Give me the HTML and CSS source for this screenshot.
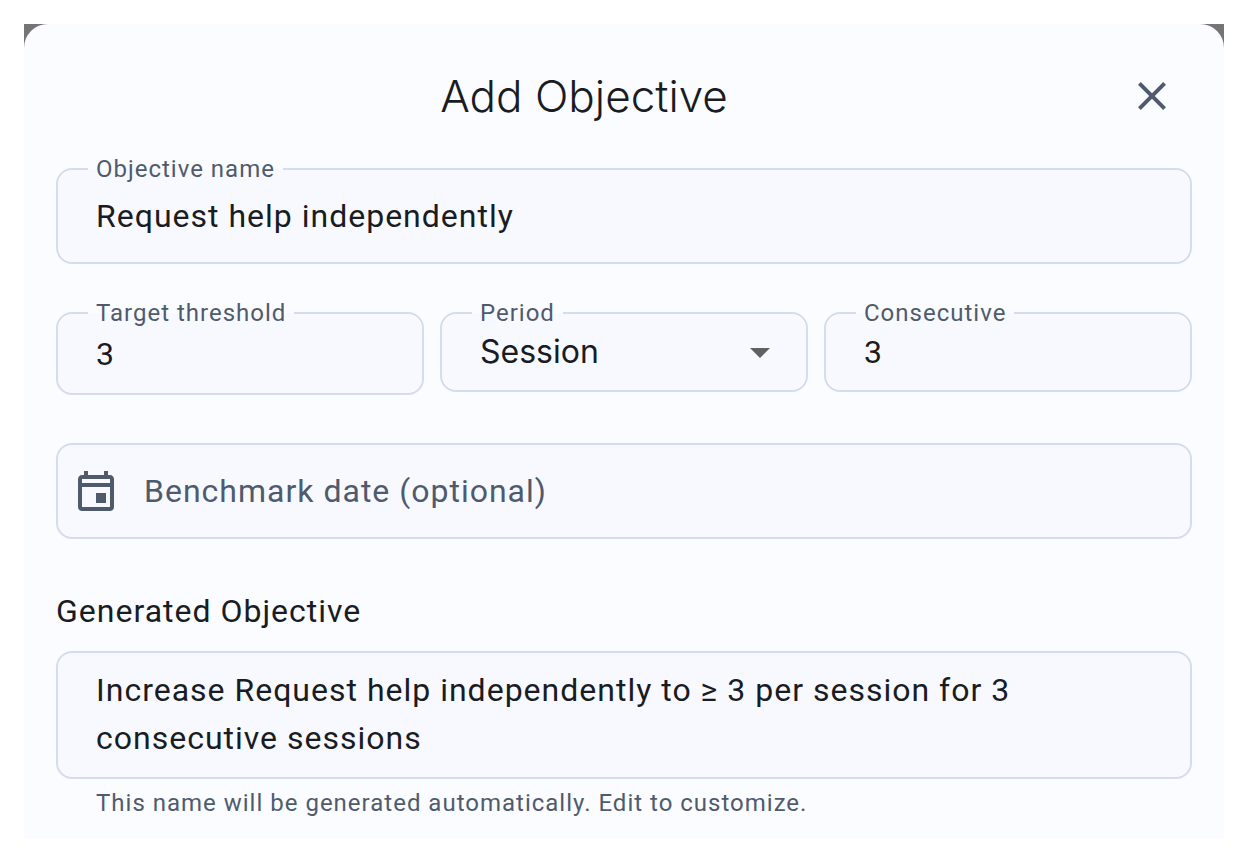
FILE: index.html
```html
<!DOCTYPE html>
<html lang="en">
<head>
<meta charset="utf-8">
<meta name="viewport" content="width=device-width, initial-scale=1">
<title>Add Objective</title>
<link rel="stylesheet" href="styles.css">
</head>
<body>
<main class="backdrop">
  <form class="sheet">
    <header class="sheet-header">
      <h1 class="title">Add Objective</h1>
      <button class="close" type="button" aria-label="Close">
        <svg class="icon" viewBox="0 0 24 24" aria-hidden="true"><path d="M19 6.41 17.59 5 12 10.59 6.41 5 5 6.41 10.59 12 5 17.59 6.41 19 12 13.41 17.59 19 19 17.59 13.41 12z"/></svg>
      </button>
    </header>

    <div class="field">
      <label class="field-label" for="name">Objective name</label>
      <input class="control control-tall" id="name" type="text" value="Request help independently">
    </div>

    <div class="row">
      <div class="field">
        <label class="field-label" for="threshold">Target threshold</label>
        <input class="control control-threshold" id="threshold" type="text" inputmode="numeric" value="3">
      </div>
      <div class="field">
        <label class="field-label" for="period">Period</label>
        <select class="control control-select" id="period">
          <option>Session</option>
          <option>Day</option>
          <option>Week</option>
        </select>
        <svg class="arrow" viewBox="0 0 24 24" aria-hidden="true"><path d="M7 10l5 5 5-5z"/></svg>
      </div>
      <div class="field">
        <label class="field-label" for="consecutive">Consecutive</label>
        <input class="control" id="consecutive" type="text" inputmode="numeric" value="3">
      </div>
    </div>

    <div class="date-field">
      <svg class="icon" viewBox="0 0 24 24" aria-hidden="true"><path fill-rule="evenodd" d="M19 4h-1V2h-2v2H8V2H6v2H5c-1.11 0-1.99.9-1.99 2L3 20c0 1.1.89 2 2 2h14c1.1 0 2-.9 2-2V6c0-1.1-.9-2-2-2zm0 16H5V10h14v10zm0-12H5V6h14v2zM12 13h5v5h-5z"/></svg>
      <input class="date-input" type="text" aria-label="Benchmark date (optional)" placeholder="Benchmark date (optional)">
    </div>

    <section class="generated">
      <h2 class="section-title"><label for="generated">Generated Objective</label></h2>
      <textarea class="control control-area" id="generated" rows="2" aria-describedby="generated-help">Increase Request help independently to ≥ 3 per session for 3 consecutive sessions</textarea>
      <p class="help" id="generated-help">This name will be generated automatically. Edit to customize.</p>
    </section>
  </form>
</main>
</body>
</html>
```
FILE: styles.css
```css
:root {
  --sheet: #fbfcff;
  --field: #f8f9ff;
  --outline: #d4dded;
  --ink: #191c22;
  --muted: #4f5b6d;
  --tracking: 1px;
}

* {
  box-sizing: border-box;
}

body {
  margin: 24px;
  background: #fff;
  color: var(--ink);
  font-family: Roboto, "Liberation Sans", sans-serif;
  font-size: 32px;
  line-height: 48px;
  letter-spacing: var(--tracking);
}

.backdrop {
  background: linear-gradient(#757575 48px, var(--sheet) 48px);
}

.sheet {
  display: flex;
  flex-direction: column;
  gap: 48px;
  padding: 32px 32px 20px;
  border-radius: 24px 24px 0 0;
  background: var(--sheet);
}

.sheet-header {
  display: flex;
  align-items: center;
  margin-bottom: -16px;
}

.title {
  flex: 1;
  margin: 0;
  font-family: Inter, Roboto, sans-serif;
  font-size: 44px;
  font-weight: 300;
  letter-spacing: normal;
  text-align: center;
}

.close {
  display: flex;
  padding: 16px;
  border: 0;
  background: none;
}

.icon {
  flex: none;
  width: 48px;
  height: 48px;
  fill: var(--muted);
}

.field {
  position: relative;
}

.field-label {
  position: absolute;
  top: -15px;
  left: 32px;
  padding: 0 8px;
  background: linear-gradient(var(--sheet) 50%, var(--field) 50%);
  color: var(--muted);
  font-size: 24px;
  line-height: 32px;
}

.control {
  display: block;
  width: 100%;
  height: 80px;
  margin: 0;
  padding: 0 38px;
  border: 2px solid var(--outline);
  border-radius: 16px;
  background: var(--field);
  color: inherit;
  font: inherit;
  letter-spacing: inherit;
}

.control-tall {
  height: 96px;
}

.control-threshold {
  height: 83px;
}

.control-select {
  appearance: none;
  font-family: Inter, Roboto, sans-serif;
  letter-spacing: normal;
}

.control-area {
  height: auto;
  padding: 13px 38px 15px;
  resize: none;
  overflow: hidden;
}

.arrow {
  position: absolute;
  top: 16px;
  right: 24px;
  width: 48px;
  height: 48px;
  fill: #616161;
  pointer-events: none;
}

.row {
  display: grid;
  grid-template-columns: repeat(3, minmax(0, 1fr));
  gap: 16px;
  align-items: start;
}

.date-field {
  display: flex;
  align-items: center;
  gap: 24px;
  height: 96px;
  padding: 0 14px;
  border: 2px solid var(--outline);
  border-radius: 16px;
  background: var(--field);
}

.date-input {
  flex: 1;
  min-width: 0;
  padding: 0;
  border: 0;
  background: none;
  color: inherit;
  font: inherit;
  letter-spacing: inherit;
}

.date-input::placeholder {
  color: var(--muted);
  opacity: 1;
}

.section-title {
  margin: 0 0 16px;
  font-size: 32px;
  font-weight: 400;
}

.help {
  margin: 8px 40px 0;
  color: var(--muted);
  font-size: 24px;
  line-height: 32px;
}
```
